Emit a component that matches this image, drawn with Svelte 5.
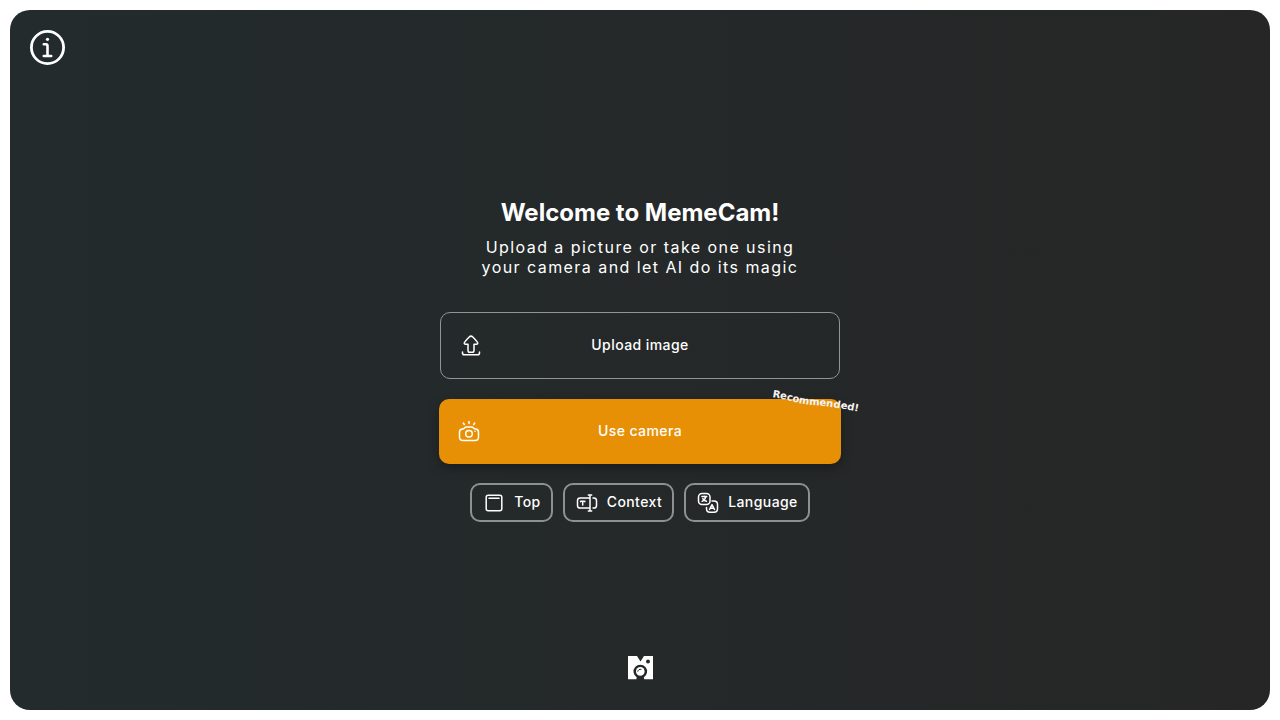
<script lang="ts">
  const options = ['Top', 'Context', 'Language'];
</script>

<main class="panel">
  <header>
    <button class="info" aria-label="About MemeCam">
      <svg viewBox="0 0 35 35" fill="none" stroke="currentColor" stroke-linecap="round" stroke-linejoin="round">
        <circle cx="17.5" cy="17.5" r="16.1" stroke-width="2.8" />
        <path d="M13.8 14.3h2.1c1 0 1.6.6 1.6 1.6v10M13.8 26h7.4" stroke-width="2.6" />
        <circle cx="17.5" cy="9.3" r="1.6" fill="currentColor" stroke="none" />
      </svg>
    </button>
  </header>

  <section class="content">
    <h1>Welcome to MemeCam!</h1>
    <p>Upload a picture or take one using your camera and let AI do its magic</p>

    <div class="actions">
      <button class="action upload">
        <svg class="icon" viewBox="0 0 24 24">
          <path d="M9 11.2H6.7c-1.5 0-1.9-1.2-.9-2.3 1.2-1.5 2.7-3.2 4.4-4.9 1.1-1.1 2.5-1.1 3.6 0 1.7 1.7 3.2 3.4 4.4 4.9 1 1.1.6 2.3-.9 2.3H15v6.2c0 1.2-.6 1.8-1.8 1.8h-2.4c-1.2 0-1.8-.6-1.8-1.8z" />
          <path d="M3.5 19v1c0 1.2.6 1.8 1.8 1.8h13.4c1.2 0 1.8-.6 1.8-1.8v-1" />
        </svg>
        <span>Upload image</span>
      </button>
      <button class="action camera">
        <svg class="icon" viewBox="0 0 24 24">
          <path d="M2.5 13.2c0-2.1.9-3.1 3-3.2 1 0 1.5-.4 2-1 .5-.7 1-1 2-1h5c1 0 1.5.3 2 1 .5.6 1 1 2 1 2.1.1 3 1.1 3 3.2V18c0 2.5-1 3.5-3.5 3.5H6c-2.5 0-3.5-1-3.5-3.5z" />
          <circle cx="12" cy="14.8" r="3.3" />
          <path d="M12 2.6V4.5M6.3 4l1 1.5M17.7 4l-1 1.5M18 12.2h.1" />
        </svg>
        <span>Use camera</span>
        <svg class="recommended" viewBox="0 0 92 32" aria-label="Recommended!">
          <defs><path id="recommended-curve" d="M1 14C16 16 26 21 42 22S68 25 104 32" /></defs>
          <text><textPath href="#recommended-curve">Recommended!</textPath></text>
        </svg>
      </button>
    </div>

    <div class="options">
      {#each options as option}
        <button class="option">
          <svg class="icon" viewBox="0 0 24 24">
            {#if option === 'Top'}
              <rect x="4.2" y="4.2" width="15.6" height="15.6" rx="2" />
              <path d="M7 7.3h10" />
            {:else if option === 'Context'}
              <path d="M14.5 6.9H5.2c-1.8 0-2.7.9-2.7 2.7v4.8c0 1.8.9 2.7 2.7 2.7h9.3M18 6.9h.8c1.8 0 2.7.9 2.7 2.7v4.8c0 1.8-.9 2.7-2.7 2.7H18M15 4.2V19.8M13.3 4h3.4M13.3 20h3.4M5.6 10.7V10.2h4.2v.5M7.7 10.2v3.8" />
            {:else}
              <rect x="2.5" y="2.5" width="11.5" height="11" rx="3.5" />
              <path d="M16 10h2c2.3 0 3.5 1.2 3.5 3.5v4.3c0 2.3-1.2 3.5-3.5 3.5h-4c-2.3 0-3.5-1.2-3.5-3.5V16.5M5.9 5.6h4.8M8.3 5.3v.4M9.9 5.8C9.3 8 8 9.4 6.2 10.3M6.8 7.6c.7 1.3 1.9 2.2 3.6 2.7M13.5 18.5l2.5-4.8 2.5 4.8M14.4 17.2h3.2" />
            {/if}
          </svg>
          <span>{option}</span>
        </button>
      {/each}
    </div>
  </section>

  <footer>
    <svg class="logo" viewBox="0 0 26 24" role="img" aria-label="MemeCam">
      <path d="M1 0H10L13.5 5.5 17 0H26V23.3H17.2L16.9 21.3A6.8 6.8 0 1 0 9.7 21.3L9.4 23.3H1Z" fill="currentColor" />
      <circle cx="21" cy="5.5" r="2" class="hole" />
      <circle cx="13.3" cy="15.4" r="4.3" fill="currentColor" />
      <path d="M10.8 15.3c.4-1.5 1.6-2.3 3.2-2" class="glint" />
    </svg>
  </footer>
</main>

<style>
  :global(body) {
    background: #fff;
  }

  .panel {
    box-sizing: border-box;
    min-height: calc(100vh - 20px);
    margin: 10px;
    padding: 20px 20px 30px;
    border-radius: 20px;
    display: grid;
    grid-template-rows: 1fr auto 1fr;
    justify-items: center;
    color: #fff;
    background: linear-gradient(to right, #232b2d, #262626);
    font-family: Inter, sans-serif;
  }

  header {
    justify-self: start;
  }

  button {
    font: inherit;
    color: inherit;
    cursor: pointer;
    background: none;
    border: 0;
    padding: 0;
  }

  .info,
  .info svg {
    display: block;
    width: 35px;
    height: 35px;
  }

  .content {
    width: 100%;
    max-width: 400px;
    padding-top: 10px;
    display: flex;
    flex-direction: column;
    align-items: center;
    text-align: center;
  }

  h1 {
    margin: 0 0 10px;
    font-size: 24px;
    line-height: 29px;
    font-weight: 700;
  }

  p {
    max-width: 330px;
    margin: 0 0 35px;
    font-size: 16px;
    line-height: 20px;
    letter-spacing: 0.09em;
  }

  .actions {
    width: 100%;
    display: flex;
    flex-direction: column;
    gap: 20px;
  }

  .action,
  .option {
    font-size: 14px;
    line-height: 23px;
    font-weight: 500;
    letter-spacing: 0.03em;
    border-radius: 10px;
  }

  .action span,
  .option span {
    padding-bottom: 2px;
  }

  .action {
    position: relative;
    display: grid;
    grid-template-columns: 24px 1fr 24px;
    align-items: start;
    padding: 20px 18px;
  }

  .upload {
    border: 1px solid #929595;
  }

  .camera {
    margin: 0 -1px;
    background: #e79006;
    box-shadow: 0 4px 12px rgb(0 0 0 / 30%);
  }

  .icon {
    width: 24px;
    height: 24px;
    fill: none;
    stroke: currentColor;
    stroke-width: 1.5;
    stroke-linecap: round;
    stroke-linejoin: round;
  }

  .recommended {
    position: absolute;
    top: -16px;
    right: -22px;
    width: 92px;
    height: 32px;
    overflow: visible;
    fill: #f4f4f4;
    font-family: "DejaVu Sans", sans-serif;
    font-size: 10px;
    font-weight: 700;
    letter-spacing: 0;
  }

  .options {
    display: flex;
    flex-wrap: wrap;
    justify-content: center;
    gap: 10px;
    margin-top: 19px;
  }

  .option {
    display: flex;
    align-items: center;
    gap: 8px;
    padding: 5px 10px;
    border: 2px solid #8e9191;
  }

  footer {
    align-self: end;
  }

  .logo {
    display: block;
    width: 26px;
    height: 24px;
  }

  .hole {
    fill: #252929;
  }

  .glint {
    fill: none;
    stroke: #252929;
    stroke-width: 1;
    stroke-linecap: round;
  }
</style>
